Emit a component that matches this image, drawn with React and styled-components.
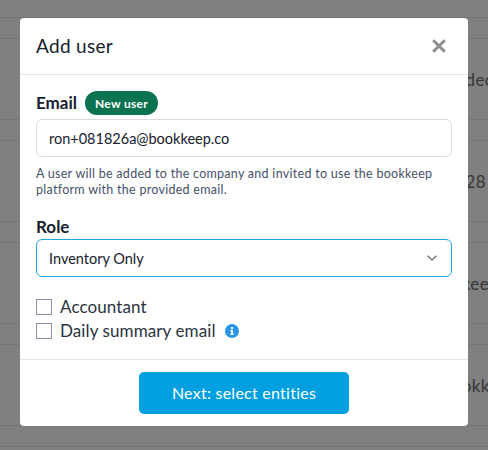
import React from 'react';
import styled, { createGlobalStyle } from 'styled-components';

const GlobalStyle = createGlobalStyle`
  html, body {
    margin: 0;
    padding: 0;
    height: 100%;
    overflow: hidden;
    background: #808080;
    font-family: Lato, "Noto Sans", sans-serif;
  }
  * { box-sizing: border-box; }
`;

const Page = styled.div`
  width: 488px;
  height: 450px;
  overflow: hidden;
  position: relative;
  background: #808080;
`;

const Table = styled.div`
  padding-top: 17px;
`;

const HeadRow = styled.div`
  height: 21px;
  border-top: 1px solid #757575;
`;

const TableRow = styled.div`
  height: 82px;
  border-top: 1px solid #757575;
  border-bottom: 1px solid #757575;
  display: flex;
  align-items: center;
  justify-content: flex-end;
  margin-bottom: 20px;
  font-size: 17px;
  letter-spacing: 0.4px;
  color: #363636;
  overflow: hidden;
  white-space: nowrap;
`;

const RowText = styled.span`
  margin-right: ${(p) => p.$right}px;
`;

const Modal = styled.div`
  position: absolute;
  left: 20px;
  top: 18px;
  width: 448px;
  height: 408px;
  background: #fff;
  border-radius: 4px;
  display: flex;
  flex-direction: column;
`;

const Header = styled.div`
  height: 57px;
  padding: 0 22px 2px 16px;
  border-bottom: 1px solid #e6e6e6;
  display: flex;
  align-items: center;
  justify-content: space-between;
`;

const Title = styled.h1`
  margin: 0;
  font-size: 19px;
  font-weight: 400;
  letter-spacing: 0.3px;
  color: #17202e;
`;

const CloseButton = styled.button`
  border: 0;
  padding: 0;
  margin-top: 2px;
  background: none;
  display: flex;
  width: 14px;
  height: 14px;
`;

const Body = styled.div`
  flex: 1;
  padding: 16px 16px 0;
`;

const LabelRow = styled.div`
  display: flex;
  align-items: center;
  gap: 8px;
  height: 24px;
`;

const Label = styled.label`
  display: block;
  font-size: 17px;
  line-height: 20px;
  font-weight: 700;
  color: #17202e;
`;

const Badge = styled.span`
  height: 24px;
  padding: 0 10px;
  border-radius: 12px;
  background: #0b7350;
  color: #fff;
  font-size: 12px;
  font-weight: 700;
  letter-spacing: 0.3px;
  display: flex;
  align-items: center;
`;

const Field = styled.div`
  margin-top: ${(p) => p.$top}px;
  height: 38px;
  padding: 0 14px 0 12px;
  border-radius: 6px;
  border: 1.5px solid ${(p) => (p.$focused ? '#1fa5e0' : '#dcdcdc')};
  display: flex;
  align-items: center;
  justify-content: space-between;
  font-size: 14.5px;
  color: #17202e;
`;

const Help = styled.p`
  margin: 9px 0 0;
  font-size: 12.5px;
  line-height: 16px;
  letter-spacing: 0.28px;
  color: #46526a;
`;

const RoleBlock = styled.div`
  margin-top: 19px;
`;

const Options = styled.div`
  margin-top: 22px;
  display: flex;
  flex-direction: column;
  gap: 8px;
`;

const Option = styled.div`
  display: flex;
  align-items: center;
  height: 16px;
  font-size: 17px;
  letter-spacing: 0.1px;
  color: #2a3342;
`;

const OptionText = styled.span`
  margin-bottom: 2px;
`;

const Box = styled.span`
  width: 16px;
  height: 16px;
  border: 1.5px solid #8b93a5;
  margin-right: 8px;
`;

const InfoIcon = styled.svg`
  width: 14px;
  height: 14px;
  margin-left: 9px;
`;

const Footer = styled.div`
  height: 67px;
  border-top: 1px solid #e6e6e6;
  display: flex;
  align-items: center;
  justify-content: center;
`;

const NextButton = styled.button`
  width: 210px;
  height: 42px;
  padding: 0 0 2px;
  border: 0;
  border-radius: 5px;
  background: #009fdf;
  color: #fff;
  font-family: inherit;
  font-size: 16px;
  font-weight: 400;
  letter-spacing: 0.25px;
`;

const App = () => (
  <Page>
    <GlobalStyle />
    <Table>
      <HeadRow />
      <TableRow><RowText $right={-39}>Undecided</RowText></TableRow>
      <TableRow><RowText $right={2}>1,28</RowText></TableRow>
      <TableRow><RowText $right={-11}>bookkeep</RowText></TableRow>
      <TableRow><RowText $right={-30}>bookkeep</RowText></TableRow>
      <HeadRow />
    </Table>
    <Modal>
      <Header>
        <Title>Add user</Title>
        <CloseButton aria-label="Close">
          <svg viewBox="0 0 14 14" width="14" height="14">
            <path d="M1.2 1.2 12.8 12.8M12.8 1.2 1.2 12.8" stroke="#8f8f8f" strokeWidth="3" fill="none" />
          </svg>
        </CloseButton>
      </Header>
      <Body>
        <LabelRow>
          <Label>Email</Label>
          <Badge>New user</Badge>
        </LabelRow>
        <Field $top={4}>ron+081826a@bookkeep.co</Field>
        <Help>A user will be added to the company and invited to use the bookkeep platform with the provided email.</Help>
        <RoleBlock>
          <Label>Role</Label>
          <Field $top={2} $focused>
            Inventory Only
            <svg viewBox="0 0 10 6" width="10" height="6">
              <path d="M.6.7 5 5 9.4.7" stroke="#6b7280" strokeWidth="1.4" fill="none" />
            </svg>
          </Field>
        </RoleBlock>
        <Options>
          <Option><Box /><OptionText>Accountant</OptionText></Option>
          <Option>
            <Box /><OptionText>Daily summary email</OptionText>
            <InfoIcon viewBox="0 0 14 14">
              <circle cx="7" cy="7" r="7" fill="#2b96e4" />
              <rect x="6" y="6" width="2" height="4.5" fill="#fff" />
              <rect x="5.2" y="9.6" width="3.6" height="1.1" fill="#fff" />
              <rect x="5.2" y="6" width="2.4" height="1" fill="#fff" />
              <circle cx="7" cy="4" r="1.2" fill="#fff" />
            </InfoIcon>
          </Option>
        </Options>
      </Body>
      <Footer>
        <NextButton>Next: select entities</NextButton>
      </Footer>
    </Modal>
  </Page>
);

export default App;
